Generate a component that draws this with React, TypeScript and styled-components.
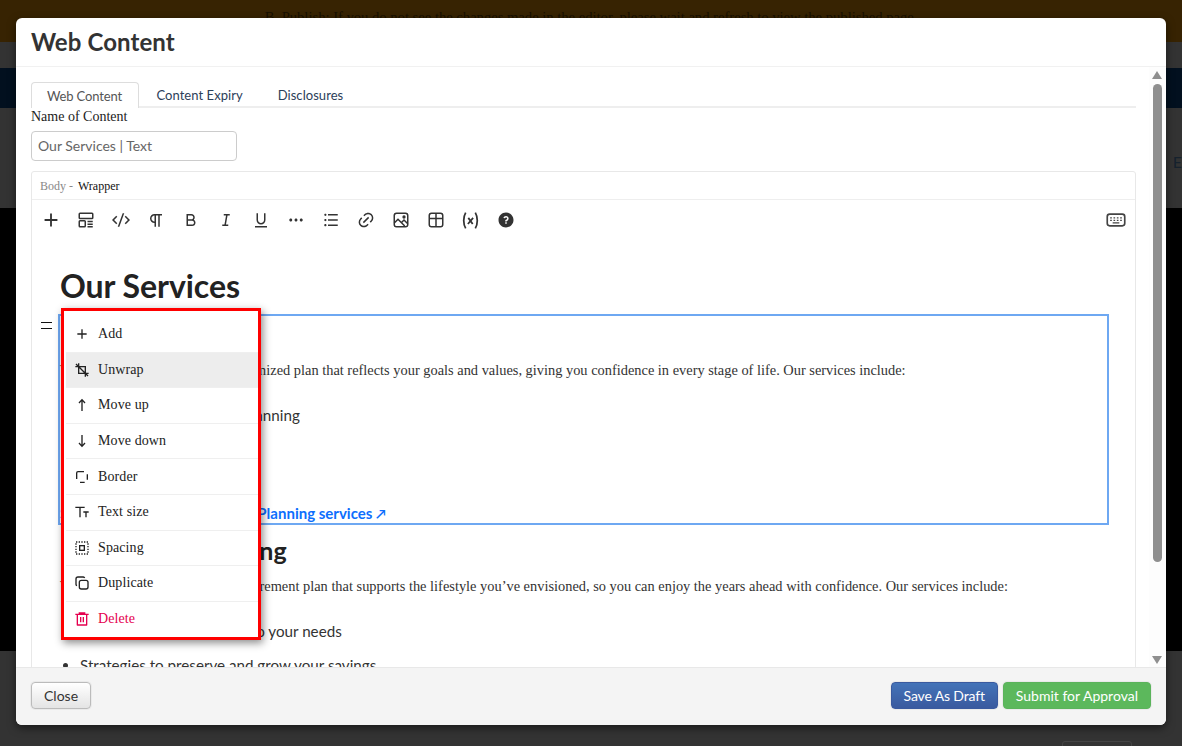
import * as React from 'react';
import styled, { createGlobalStyle } from 'styled-components';
import {
  RiAddLine,
  RiBold,
  RiCodeSSlashLine,
  RiDeleteBin6Line,
  RiItalic,
  RiLink,
  RiListUnordered,
  RiMoreFill,
  RiParagraph,
  RiQuestionFill,
  RiUnderline
} from 'react-icons/ri';

const GlobalStyle = createGlobalStyle`
  html, body { margin: 0; padding: 0; height: 100%; overflow: hidden; }
  body { font-family: "Lato", "Liberation Sans", sans-serif; }
`;

const S = {
  Page: styled.div`
    position: relative;
    height: 746px;
    display: flex;
    flex-direction: column;
    overflow: hidden;
  `,
  Notice: styled.div`
    height: 42px;
    background: #372302;
    color: #171000;
    font: 14.6px "Liberation Serif", serif;
    text-align: center;
    padding-top: 9px;
    box-sizing: border-box;
  `,
  GrayBand: styled.div<{ $height: number }>`
    height: ${p => p.$height}px;
    background: #333333;
    display: flex;
    align-items: center;
    justify-content: flex-end;
    color: #16222e;
    font-size: 16px;
    overflow: hidden;
    flex-shrink: 0;
  `,
  EdgeText: styled.span`
    margin-top: 6px;
  `,
  NavBand: styled.div`
    height: 40px;
    background: #02101f;
  `,
  BlackBand: styled.div`
    height: 443px;
    background: #000;
  `,
  Modal: styled.div`
    position: absolute;
    left: 16px;
    top: 18px;
    width: 1150px;
    height: 707px;
    display: flex;
    flex-direction: column;
    background: #fff;
    border-radius: 6px;
    overflow: hidden;
    box-shadow: 0 3px 9px rgba(0, 0, 0, 0.5);
  `,
  Header: styled.div`
    height: 48px;
    padding: 0 15px;
    display: flex;
    align-items: center;
    border-bottom: 1px solid #f1f1f1;
    flex-shrink: 0;
  `,
  Title: styled.h4`
    margin: 0;
    font: 700 24px/1.1 "Lato", sans-serif;
    color: #333;
    letter-spacing: 0.1px;
  `,
  Body: styled.div`
    flex: 1;
    min-height: 0;
    display: flex;
  `,
  Content: styled.div`
    flex: 1;
    min-width: 0;
    overflow: hidden;
    padding: 15px 13px 0 15px;
  `,
  Tabs: styled.div`
    display: flex;
    border-bottom: 2px solid #eee;
    height: 24px;
  `,
  Tab: styled.div<{ $active?: boolean }>`
    height: ${p => (p.$active ? 26 : 24)}px;
    box-sizing: border-box;
    padding: ${p => (p.$active ? '1px 16px 0 15px' : '1px 15.5px 0')};
    margin-right: ${p => (p.$active ? 1 : 2)}px;
    display: flex;
    align-items: center;
    font-size: 13px;
    letter-spacing: ${p => (p.$active ? '-0.15px' : '0.05px')};
    color: ${p => (p.$active ? '#555' : '#2c4059')};
    background: ${p => (p.$active ? '#fff' : 'transparent')};
    border: 1px solid ${p => (p.$active ? '#ddd' : 'transparent')};
    border-bottom: 0;
    border-radius: 4px 4px 0 0;
  `,
  FieldLabel: styled.label`
    display: block;
    font: 14px/16px "Liberation Serif", serif;
    color: #222;
    margin: 1px 0 6px;
  `,
  TextInput: styled.div`
    width: 206px;
    height: 30px;
    box-sizing: border-box;
    border: 1px solid #ccc;
    border-radius: 4px;
    padding: 0 6px 2px;
    display: flex;
    align-items: center;
    font-size: 14px;
    color: #666;
    margin-bottom: 10px;
  `,
  Editor: styled.div`
    border: 1px solid #e8e8e8;
    border-radius: 3px 3px 0 0;
    height: 520px;
    position: relative;
    overflow: hidden;
  `,
  Crumbs: styled.div`
    height: 28px;
    box-sizing: border-box;
    padding: 2px 8px 0;
    display: flex;
    align-items: center;
    gap: 5px;
    border-bottom: 1px solid #eee;
    font: 12px "Liberation Serif", serif;
    color: #111;
  `,
  CrumbMuted: styled.span`
    color: #888;
  `,
  Toolbar: styled.div`
    height: 40px;
    display: flex;
    align-items: center;
    padding: 0 9px 0 1px;
  `,
  ToolButton: styled.span`
    width: 35px;
    height: 24px;
    display: flex;
    align-items: center;
    justify-content: center;
    color: #333;
    font-size: 18px;
  `,
  ToolEnd: styled.span`
    margin-left: auto;
    display: flex;
    color: #444;
  `,
  Document: styled.div`
    padding: 26px 26px 0 28px;
    position: relative;
  `,
  Heading: styled.h1`
    margin: 0 0 8px;
    font: 700 32px/40px "Lato", sans-serif;
    letter-spacing: -0.05px;
    color: #222;
  `,
  Wrapper: styled.div`
    border: 2px solid #6ea8f2;
    height: 211px;
    box-sizing: border-box;
    margin-left: -2px;
    position: relative;
  `,
  SubHeading: styled.h2<{ $top?: number }>`
    margin: 0;
    font: 700 25px/30px "Lato", sans-serif;
    color: #222;
    padding-top: ${p => p.$top ?? 0}px;
  `,
  Para: styled.p<{ $top: number }>`
    margin: ${p => p.$top}px 0 0;
    font: 14.4px/20px "Liberation Serif", serif;
    color: #333;
  `,
  BulletList: styled.ul<{ $top: number }>`
    margin: ${p => p.$top}px 0 0;
    padding-left: 20px;
    font-size: 15.2px;
    line-height: 20px;
    color: #333;
  `,
  Bullet: styled.li`
    margin-bottom: 14px;
  `,
  MoreLink: styled.a`
    display: block;
    position: absolute;
    bottom: 0;
    left: 0;
    font-size: 15px;
    line-height: 18px;
    font-weight: 700;
    color: #0d6efd;
  `,
  LinkArrow: styled.span`
    font-size: 13px;
  `,
  Handle: styled.span`
    position: absolute;
    left: 9px;
    top: 82px;
    width: 11px;
    height: 5px;
    border-top: 1.5px solid #111;
    border-bottom: 1.5px solid #111;
  `,
  Menu: styled.div`
    position: absolute;
    left: 29px;
    top: 68px;
    width: 200px;
    height: 332px;
    box-sizing: border-box;
    border: 3px solid #f00;
    padding: 6px 0 0 2px;
    background: #fff;
    box-shadow: 2px 3px 8px rgba(0, 0, 0, 0.45);
    z-index: 2;
  `,
  MenuItem: styled.div<{ $danger?: boolean; $hover?: boolean }>`
    height: 35.6px;
    box-sizing: border-box;
    padding-left: 8px;
    display: flex;
    align-items: center;
    gap: 8px;
    font: 14px "Liberation Serif", serif;
    letter-spacing: 0.1px;
    color: ${p => (p.$danger ? '#e5004f' : '#222')};
    background: ${p => (p.$hover ? '#ededed' : 'transparent')};
    border-bottom: 1px solid ${p => (p.$danger ? 'transparent' : '#efefef')};
    svg { width: 16px; height: 16px; flex-shrink: 0; }
  `,
  ScrollBar: styled.div`
    width: 17px;
    flex-shrink: 0;
    background: #fdfdfd;
    display: flex;
    flex-direction: column;
    align-items: center;
    padding-top: 4px;
    padding-right: 1px;
    box-sizing: border-box;
  `,
  ArrowUp: styled.span`
    width: 0;
    height: 0;
    border-left: 5px solid transparent;
    border-right: 5px solid transparent;
    border-bottom: 8px solid #8f8f8f;
  `,
  ArrowDown: styled.span`
    width: 0;
    height: 0;
    margin-top: auto;
    margin-bottom: 3px;
    border-left: 5px solid transparent;
    border-right: 5px solid transparent;
    border-top: 8px solid #8f8f8f;
  `,
  Thumb: styled.span`
    width: 9px;
    height: 478px;
    margin-top: 5px;
    border-radius: 5px;
    background: #8f8f8f;
  `,
  Footer: styled.div`
    height: 58px;
    flex-shrink: 0;
    box-sizing: border-box;
    background: #f4f4f4;
    border-top: 1px solid #e8e8e8;
    padding: 0 15px 2px;
    display: flex;
    align-items: center;
    gap: 5px;
  `,
  Button: styled.button<{ $kind: 'default' | 'primary' | 'success' }>`
    height: 27px;
    box-sizing: border-box;
    padding: 0 12px;
    font: 14px "Lato", sans-serif;
    letter-spacing: ${p => (p.$kind === 'primary' ? '-0.15px' : '0')};
    border-radius: 4px;
    color: ${p => (p.$kind === 'default' ? '#333' : '#fff')};
    border: 1px solid ${p => (p.$kind === 'default' ? '#bbb' : p.$kind === 'primary' ? '#3a5a9f' : '#5bb35b')};
    background: ${p =>
      p.$kind === 'default'
        ? 'linear-gradient(#fff, #e4e4e4)'
        : p.$kind === 'primary'
          ? 'linear-gradient(#4373b8, #3a5a9f)'
          : '#5cb85c'};
    box-shadow: 0 0 0 1px rgba(0, 0, 0, 0.04);
  `,
  Spacer: styled.span`
    flex: 1;
  `,
  CornerBox: styled.span`
    position: absolute;
    left: 1062px;
    top: 741px;
    width: 68px;
    height: 12px;
    border: 1px solid #444;
    border-radius: 3px;
  `
};

const IconSvg: React.FC<{ children: React.ReactNode; size?: number }> = ({ children, size = 18 }) => (
  <svg
    width={size}
    height={size}
    viewBox="0 0 24 24"
    fill="none"
    stroke="currentColor"
    strokeWidth={2}
  >
    {children}
  </svg>
);

const BlockIcon = () => (
  <IconSvg>
    <rect x="3" y="3" width="18" height="7" rx="1" />
    <rect x="3" y="13" width="8" height="8" rx="1" />
    <path d="M14 14h7M14 17.5h7M14 21h7" />
  </IconSvg>
);

const ImageIcon = () => (
  <IconSvg>
    <rect x="3" y="3" width="18" height="18" rx="3" />
    <path d="M3 16l5-5 9 9M13 15l3-3 5 5" />
    <circle cx="16" cy="8" r="1.2" fill="currentColor" />
  </IconSvg>
);

const TableIcon = () => (
  <IconSvg>
    <rect x="3" y="3" width="18" height="18" rx="3" />
    <path d="M3 10h18M12 3v18" />
  </IconSvg>
);

const VariableIcon = () => (
  <IconSvg size={21}>
    <path d="M6.5 3C3.5 8 3.5 16 6.5 21M17.5 3c3 5 3 13 0 18" />
    <path d="M9.5 9l5 7M15 9l-6 7" />
  </IconSvg>
);

const KeyboardIcon = () => (
  <IconSvg size={20}>
    <rect x="1.5" y="5" width="21" height="14" rx="3" />
    <path d="M5 9.5h2M9 9.5h2M13 9.5h2M17 9.5h2M5 12.5h2M9 12.5h2M13 12.5h2M17 12.5h2M8 15.5h8" strokeWidth={1.6} />
  </IconSvg>
);

const UnwrapIcon = () => (
  <IconSvg>
    <path d="M7 2v15h15M2 7h15v15M3 3l18 18" />
  </IconSvg>
);

const ArrowUpIcon = () => (
  <IconSvg>
    <path d="M12 21V4M7.5 9L12 4l4.5 5" />
  </IconSvg>
);

const ArrowDownIcon = () => (
  <IconSvg>
    <path d="M12 3v17M7.5 15l4.5 5 4.5-5" />
  </IconSvg>
);

const BorderIcon = () => (
  <IconSvg>
    <path d="M4 15V6a2 2 0 0 1 2-2h9M20 8v8M9 20h7" />
  </IconSvg>
);

const TextSizeIcon = () => (
  <IconSvg>
    <path d="M2 5h14M9 5v15M14 12h8M18 12v8" />
  </IconSvg>
);

const SpacingIcon = () => (
  <IconSvg>
    <rect x="3" y="3" width="18" height="18" strokeDasharray="2 2" />
    <rect x="8.5" y="8.5" width="7" height="7" />
  </IconSvg>
);

const DuplicateIcon = () => (
  <IconSvg>
    <rect x="8" y="8" width="13" height="13" rx="3" />
    <path d="M16 4.5A2.5 2.5 0 0 0 14 3H6a3 3 0 0 0-3 3v8a2.5 2.5 0 0 0 1.5 2" />
  </IconSvg>
);

const tools = [
  <RiAddLine key="add" size={22} />,
  <BlockIcon key="block" />,
  <RiCodeSSlashLine key="code" />,
  <RiParagraph key="para" />,
  <RiBold key="bold" />,
  <RiItalic key="italic" />,
  <RiUnderline key="underline" />,
  <RiMoreFill key="more" />,
  <RiListUnordered key="list" />,
  <RiLink key="link" />,
  <ImageIcon key="image" />,
  <TableIcon key="table" />,
  <VariableIcon key="var" />,
  <RiQuestionFill key="help" />
];

const menuItems: { label: string; icon: React.ReactNode; hover?: boolean; danger?: boolean }[] = [
  { label: 'Add', icon: <RiAddLine /> },
  { label: 'Unwrap', icon: <UnwrapIcon />, hover: true },
  { label: 'Move up', icon: <ArrowUpIcon /> },
  { label: 'Move down', icon: <ArrowDownIcon /> },
  { label: 'Border', icon: <BorderIcon /> },
  { label: 'Text size', icon: <TextSizeIcon /> },
  { label: 'Spacing', icon: <SpacingIcon /> },
  { label: 'Duplicate', icon: <DuplicateIcon /> },
  { label: 'Delete', icon: <RiDeleteBin6Line />, danger: true }
];

const App: React.FC = () => {
  return (
    <S.Page>
      <GlobalStyle />
      <S.Notice>B. Publish: If you do not see the changes made in the editor, please wait and refresh to view the published page.</S.Notice>
      <S.GrayBand $height={26} />
      <S.NavBand />
      <S.GrayBand $height={100}>
        <S.EdgeText>E</S.EdgeText>
      </S.GrayBand>
      <S.BlackBand />
      <S.GrayBand $height={95} />
      <S.CornerBox />

      <S.Modal>
        <S.Header>
          <S.Title>Web Content</S.Title>
        </S.Header>
        <S.Body>
          <S.Content>
            <S.Tabs>
              <S.Tab $active>Web Content</S.Tab>
              <S.Tab>Content Expiry</S.Tab>
              <S.Tab>Disclosures</S.Tab>
            </S.Tabs>
            <S.FieldLabel>Name of Content</S.FieldLabel>
            <S.TextInput>Our Services | Text</S.TextInput>
            <S.Editor>
              <S.Crumbs>
                <S.CrumbMuted>Body -</S.CrumbMuted>
                <span>Wrapper</span>
              </S.Crumbs>
              <S.Toolbar>
                {tools.map((tool, idx) => (
                  <S.ToolButton key={idx}>{tool}</S.ToolButton>
                ))}
                <S.ToolEnd>
                  <KeyboardIcon />
                </S.ToolEnd>
              </S.Toolbar>
              <S.Document>
                <S.Heading>Our Services</S.Heading>
                <S.Handle />
                <S.Menu>
                  {menuItems.map(item => (
                    <S.MenuItem key={item.label} $hover={item.hover} $danger={item.danger}>
                      {item.icon}
                      {item.label}
                    </S.MenuItem>
                  ))}
                </S.Menu>
                <S.Wrapper>
                  <S.SubHeading>Financial Planning</S.SubHeading>
                  <S.Para $top={14}>
                    We work with you to craft a customized plan that reflects your goals and values, giving you confidence in every stage of life. Our services include:
                  </S.Para>
                  <S.BulletList $top={25}>
                    <S.Bullet>Comprehensive lifestyle planning</S.Bullet>
                  </S.BulletList>
                  <S.MoreLink>
                    See more about our Financial Planning services <S.LinkArrow>↗</S.LinkArrow>
                  </S.MoreLink>
                </S.Wrapper>
                <S.SubHeading $top={10}>Retirement Planning</S.SubHeading>
                <S.Para $top={11}>
                  We help you find a sustainable retirement plan that supports the lifestyle you’ve envisioned, so you can enjoy the years ahead with confidence. Our services include:
                </S.Para>
                <S.BulletList $top={25}>
                  <S.Bullet>Retirement plans tailored to your needs</S.Bullet>
                  <S.Bullet>Strategies to preserve and grow your savings</S.Bullet>
                </S.BulletList>
              </S.Document>
            </S.Editor>
          </S.Content>
          <S.ScrollBar>
            <S.ArrowUp />
            <S.Thumb />
            <S.ArrowDown />
          </S.ScrollBar>
        </S.Body>
        <S.Footer>
          <S.Button $kind="default">Close</S.Button>
          <S.Spacer />
          <S.Button $kind="primary">Save As Draft</S.Button>
          <S.Button $kind="success">Submit for Approval</S.Button>
        </S.Footer>
      </S.Modal>
    </S.Page>
  );
};

export default App;
